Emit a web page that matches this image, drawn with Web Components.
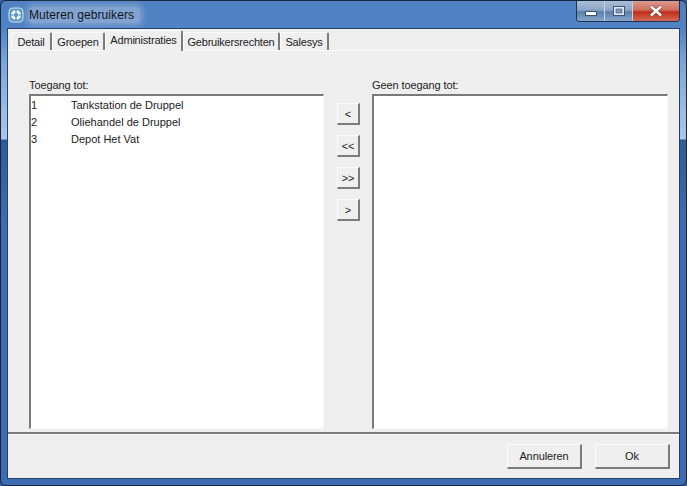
<!DOCTYPE html>
<html>
<head>
<meta charset="utf-8">
<title>Muteren gebruikers</title>
<style>
  html, body { margin: 0; padding: 0; width: 687px; height: 486px; overflow: hidden; background: #2f5f9f; }
  body { font: 11px "Liberation Sans", Arial, sans-serif; color: #1c1c1c; }
</style>
</head>
<body>
<win-window caption="Muteren gebruikers">
  <tab-strip>
    <tab-item width="41">Detail</tab-item>
    <tab-item width="53">Groepen</tab-item>
    <tab-item width="78" active>Administraties</tab-item>
    <tab-item width="97">Gebruikersrechten</tab-item>
    <tab-item width="49">Salesys</tab-item>
  </tab-strip>
  <transfer-panel>
    <list-box slot="left" label="Toegang tot:">
      <list-row num="1">Tankstation de Druppel</list-row>
      <list-row num="2">Oliehandel de Druppel</list-row>
      <list-row num="3">Depot Het Vat</list-row>
    </list-box>
    <flat-button slot="middle" small>&lt;</flat-button>
    <flat-button slot="middle" small>&lt;&lt;</flat-button>
    <flat-button slot="middle" small>&gt;&gt;</flat-button>
    <flat-button slot="middle" small>&gt;</flat-button>
    <list-box slot="right" label="Geen toegang tot:"></list-box>
  </transfer-panel>
  <dialog-footer>
    <flat-button>Annuleren</flat-button>
    <flat-button>Ok</flat-button>
  </dialog-footer>
</win-window>
<script>
"use strict";
customElements.define("win-window", class extends HTMLElement {
  constructor() {
    super();
    let shadowRoot = this.attachShadow({mode: 'open'});
    shadowRoot.innerHTML = `
      <style>
        :host {
          display: flex;
          flex-direction: column;
          box-sizing: border-box;
          width: 687px;
          height: 486px;
          border: 1px solid #16263f;
          border-radius: 6px;
          background: linear-gradient(180deg, #4f80c1 0, #5183c4 28px, #7ea4d6 60px, #9dbce0 110px, #a9c7e6 138px, #2f5a9a 139px, #3f6cb0 220px, #3f6cb0 100%);
        }
        .bar {
          display: flex;
          align-items: center;
          height: 28px;
          flex: none;
          padding-left: 7px;
        }
        .title {
          margin-left: 5px;
          padding: 1px 6px 1px 0;
          font: 12px "Liberation Sans", Arial, sans-serif;
          letter-spacing: .1px;
          color: #10151c;
          background: rgba(190, 205, 225, .45);
          box-shadow: 0 0 6px 3px rgba(190, 205, 225, .4);
          border-radius: 4px;
        }
        .controls {
          display: flex;
          align-self: flex-start;
          margin-left: auto;
          margin-right: 6px;
          height: 20px;
          border: 1px solid #1d3354;
          border-top: 0;
          border-radius: 0 0 4px 4px;
          overflow: hidden;
        }
        .controls div {
          display: flex;
          align-items: center;
          justify-content: center;
          height: 20px;
          box-sizing: border-box;
        }
        .min, .max {
          width: 28px;
          border-right: 1px solid #c5d3e4;
          background: linear-gradient(180deg, #a9bdd6 0, #8da6c6 45%, #5a7ea8 55%, #89a6c8 100%);
        }
        .close {
          width: 46px;
          background: linear-gradient(180deg, #dc9a8c 0, #cf6f5e 45%, #bf2d1b 55%, #d46a55 100%);
        }
        .client {
          flex: 1;
          display: flex;
          flex-direction: column;
          margin: 0 7px 7px 7px;
          min-height: 0;
          background: #efefef;
          box-shadow: 0 0 0 1px #24406b;
        }
      </style>
      <div class="bar">
        <svg width="16" height="16" viewBox="0 0 16 16">
          <rect x="1" y="1" width="14" height="14" rx="3.5" fill="#5b9cc4" stroke="#cfe6f1"/>
          <circle cx="8" cy="8" r="5" fill="#f2f8fb"/>
          <circle cx="8" cy="8" r="2.2" fill="#5b9cc4"/>
          <path d="M8 2.5v3M8 10.5v3M2.5 8h3M10.5 8h3" stroke="#3f7ca6" stroke-width="1.2"/>
        </svg>
        <span class="title"></span>
        <div class="controls">
          <div class="min">
            <svg width="12" height="12" viewBox="0 0 12 12"><rect x=".5" y="6.5" width="11" height="4" fill="#fff" stroke="#3c5474"/></svg>
          </div>
          <div class="max">
            <svg width="12" height="10" viewBox="0 0 12 10"><rect x=".5" y=".5" width="11" height="9" fill="#dfe8f2" stroke="#3c5474"/><rect x="3" y="3" width="6" height="4" fill="#7f98b8" stroke="#3c5474" stroke-width=".6"/></svg>
          </div>
          <div class="close">
            <svg width="14" height="12" viewBox="0 0 14 12"><path d="M2 1.5 12 10.5M12 1.5 2 10.5" stroke="#7d3a30" stroke-width="4"/><path d="M2 1.5 12 10.5M12 1.5 2 10.5" stroke="#fff" stroke-width="2.6"/></svg>
          </div>
        </div>
      </div>
      <div class="client"><slot></slot></div>
    `;
    shadowRoot.querySelector(".title").textContent = this.getAttribute("caption");
  }
});

customElements.define("tab-strip", class extends HTMLElement {
  constructor() {
    super();
    let shadowRoot = this.attachShadow({mode: 'open'});
    shadowRoot.innerHTML = `
      <style>
        :host {
          display: flex;
          align-items: flex-end;
          box-sizing: border-box;
          height: 22px;
          flex: none;
          padding-left: 3px;
          border-bottom: 1px solid #fbfbfb;
        }
      </style>
      <slot></slot>
    `;
  }
});

customElements.define("tab-item", class extends HTMLElement {
  constructor() {
    super();
    let shadowRoot = this.attachShadow({mode: 'open'});
    shadowRoot.innerHTML = `
      <style>
        :host {
          display: block;
          box-sizing: border-box;
          height: 18px;
          padding-top: 2px;
          font-size: 11px;
          line-height: 15px;
          letter-spacing: -.2px;
          text-align: center;
          white-space: nowrap;
          border-top: 1px solid #fbfbfb;
          border-left: 1px solid #fbfbfb;
          border-right: 2px solid #7b7b7b;
          border-radius: 2px 2px 0 0;
        }
        :host([active]) {
          height: 21px;
          margin-bottom: -1px;
          background: #efefef;
        }
      </style>
      <slot></slot>
    `;
    this.style.width = this.getAttribute("width") + "px";
  }
});

customElements.define("transfer-panel", class extends HTMLElement {
  constructor() {
    super();
    let shadowRoot = this.attachShadow({mode: 'open'});
    shadowRoot.innerHTML = `
      <style>
        :host {
          display: grid;
          grid-template-columns: 295px 48px 296px;
          flex: 1;
          min-height: 0;
          box-sizing: border-box;
          padding: 28px 10px 3px 21px;
          border-bottom: 2px solid #7a7a7a;
        }
        .middle {
          display: flex;
          flex-direction: column;
          gap: 10px;
          padding: 24px 0 0 13px;
        }
      </style>
      <slot name="left"></slot>
      <div class="middle"><slot name="middle"></slot></div>
      <slot name="right"></slot>
    `;
  }
});

customElements.define("list-box", class extends HTMLElement {
  constructor() {
    super();
    let shadowRoot = this.attachShadow({mode: 'open'});
    shadowRoot.innerHTML = `
      <style>
        :host {
          display: flex;
          flex-direction: column;
          min-height: 0;
        }
        .label {
          height: 15px;
          line-height: 13px;
          font-size: 11px;
          letter-spacing: -.1px;
        }
        .box {
          flex: 1;
          box-sizing: border-box;
          padding: 1px 0 0 0;
          background: #fff;
          border-top: 2px solid #7a7a7a;
          border-left: 2px solid #7a7a7a;
          border-right: 1px solid #f8f8f8;
          border-bottom: 1px solid #f8f8f8;
        }
      </style>
      <div class="label"></div>
      <div class="box"><slot></slot></div>
    `;
    shadowRoot.querySelector(".label").textContent = this.getAttribute("label");
  }
});

customElements.define("list-row", class extends HTMLElement {
  constructor() {
    super();
    let shadowRoot = this.attachShadow({mode: 'open'});
    shadowRoot.innerHTML = `
      <style>
        :host {
          display: grid;
          grid-template-columns: 40px 1fr;
          height: 17px;
          line-height: 17px;
          font-size: 11px;
          white-space: nowrap;
        }
      </style>
      <span class="num"></span><span><slot></slot></span>
    `;
    shadowRoot.querySelector(".num").textContent = this.getAttribute("num");
  }
});

customElements.define("flat-button", class extends HTMLElement {
  constructor() {
    super();
    let shadowRoot = this.attachShadow({mode: 'open'});
    shadowRoot.innerHTML = `
      <style>
        :host {
          display: flex;
          align-items: center;
          justify-content: center;
          box-sizing: border-box;
          width: 75px;
          height: 25px;
          font-size: 11px;
          letter-spacing: -.1px;
          background: #efefef;
          border-top: 1px solid #fbfbfb;
          border-left: 1px solid #fbfbfb;
          border-right: 2px solid #7c7c7c;
          border-bottom: 2px solid #7c7c7c;
        }
        :host([small]) {
          width: 23px;
          height: 22px;
        }
      </style>
      <slot></slot>
    `;
  }
});

customElements.define("dialog-footer", class extends HTMLElement {
  constructor() {
    super();
    let shadowRoot = this.attachShadow({mode: 'open'});
    shadowRoot.innerHTML = `
      <style>
        :host {
          display: flex;
          justify-content: flex-end;
          gap: 13px;
          flex: none;
          height: 44px;
          box-sizing: border-box;
          padding: 9px 9px 0 0;
          border-top: 1px solid #f8f8f8;
        }
      </style>
      <slot></slot>
    `;
  }
});
</script>
</body>
</html>
